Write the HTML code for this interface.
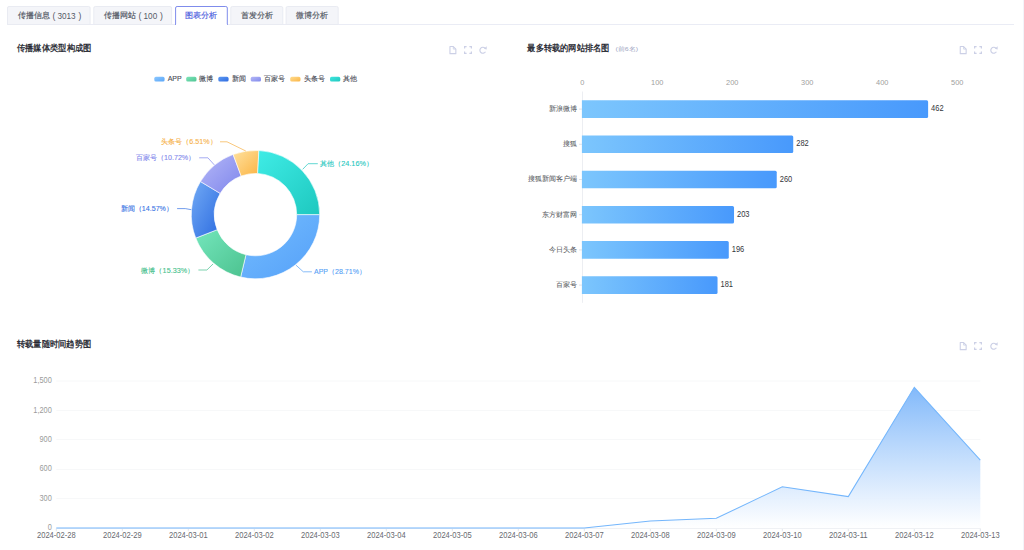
<!DOCTYPE html>
<html><head><meta charset="utf-8"><style>
html,body{margin:0;padding:0;background:#fff;width:1024px;height:550px;overflow:hidden}
svg{display:block;font-family:"Liberation Sans", sans-serif}
</style></head><body>
<svg width="1024" height="550" viewBox="0 0 1024 550">
<defs><linearGradient id="pg0" x1="0" y1="0" x2="1" y2="1"><stop offset="0" stop-color="#74bdff"/><stop offset="1" stop-color="#55a0f8"/></linearGradient><linearGradient id="pg1" x1="0" y1="0" x2="1" y2="1"><stop offset="0" stop-color="#74e6bc"/><stop offset="1" stop-color="#4cc28f"/></linearGradient><linearGradient id="pg2" x1="0" y1="0" x2="1" y2="1"><stop offset="0" stop-color="#72aaf5"/><stop offset="1" stop-color="#2d6ce0"/></linearGradient><linearGradient id="pg3" x1="0" y1="0" x2="1" y2="1"><stop offset="0" stop-color="#b5b8f7"/><stop offset="1" stop-color="#7f86ec"/></linearGradient><linearGradient id="pg4" x1="0" y1="0" x2="1" y2="1"><stop offset="0" stop-color="#ffe2a0"/><stop offset="1" stop-color="#fbb444"/></linearGradient><linearGradient id="pg5" x1="0" y1="0" x2="1" y2="1"><stop offset="0" stop-color="#3fece6"/><stop offset="1" stop-color="#1ec8bf"/></linearGradient><linearGradient id="lg0" x1="0" y1="0" x2="1" y2="1"><stop offset="0" stop-color="#8cc8ff"/><stop offset="1" stop-color="#5aa6f8"/></linearGradient><linearGradient id="lg1" x1="0" y1="0" x2="1" y2="1"><stop offset="0" stop-color="#7ee5b8"/><stop offset="1" stop-color="#4fc494"/></linearGradient><linearGradient id="lg2" x1="0" y1="0" x2="1" y2="1"><stop offset="0" stop-color="#5d9af2"/><stop offset="1" stop-color="#2f6be0"/></linearGradient><linearGradient id="lg3" x1="0" y1="0" x2="1" y2="1"><stop offset="0" stop-color="#b5b8f7"/><stop offset="1" stop-color="#8089ec"/></linearGradient><linearGradient id="lg4" x1="0" y1="0" x2="1" y2="1"><stop offset="0" stop-color="#ffdc8f"/><stop offset="1" stop-color="#fbb444"/></linearGradient><linearGradient id="lg5" x1="0" y1="0" x2="1" y2="1"><stop offset="0" stop-color="#40e6df"/><stop offset="1" stop-color="#1fc7be"/></linearGradient><linearGradient id="bg" x1="0" y1="0" x2="1" y2="0"><stop offset="0" stop-color="#7cc6fd"/><stop offset="1" stop-color="#4899fc"/></linearGradient><linearGradient id="ag" x1="0" y1="0" x2="0" y2="1"><stop offset="0" stop-color="#82b9fa"/><stop offset="1" stop-color="#ffffff" stop-opacity="0.9"/></linearGradient></defs>
<rect x="1023" y="0" width="1" height="550" fill="#f3f4f9"/>
<line x1="7" y1="24.5" x2="1014" y2="24.5" stroke="#eaecf5" stroke-width="1"/>
<path d="M7.5,24.5 V8 Q7.5,6.5 9,6.5 H88.6 Q90.1,6.5 90.1,8 V24.5 Z" fill="#f4f5f9" stroke="#e9ebf2" stroke-width="1"/>
<path d="M93.8,24.5 V8 Q93.8,6.5 95.3,6.5 H170.1 Q171.6,6.5 171.6,8 V24.5 Z" fill="#f4f5f9" stroke="#e9ebf2" stroke-width="1"/>
<path d="M175.6,25 V8 Q175.6,6.5 177.1,6.5 H225.8 Q227.3,6.5 227.3,8 V25" fill="#fff" stroke="#7f8cec" stroke-width="1"/>
<rect x="176.1" y="24" width="50.70000000000002" height="2" fill="#fff"/>
<path d="M230.8,24.5 V8 Q230.8,6.5 232.3,6.5 H281.3 Q282.8,6.5 282.8,8 V24.5 Z" fill="#f4f5f9" stroke="#e9ebf2" stroke-width="1"/>
<path d="M286.1,24.5 V8 Q286.1,6.5 287.6,6.5 H336.7 Q338.2,6.5 338.2,8 V24.5 Z" fill="#f4f5f9" stroke="#e9ebf2" stroke-width="1"/>
<text x="185.40" y="15.20" font-size="8" fill="#4f62e0" text-anchor="start" font-weight="normal" dominant-baseline="central" stroke="#4f62e0" stroke-width="0.18" >图表分析</text>
<text x="241.00" y="15.20" font-size="8" fill="#555a66" text-anchor="start" font-weight="normal" dominant-baseline="central" stroke="#555a66" stroke-width="0.18" >首发分析</text>
<text x="296.40" y="15.20" font-size="8" fill="#555a66" text-anchor="start" font-weight="normal" dominant-baseline="central" stroke="#555a66" stroke-width="0.18" >微博分析</text>
<text x="17.80" y="15.20" font-size="8" fill="#555a66" text-anchor="start" font-weight="normal" dominant-baseline="central" stroke="#555a66" stroke-width="0.18" >传播信息</text>
<text x="52.40" y="15.60" font-size="8.6" fill="#555a66" text-anchor="start" font-weight="normal" dominant-baseline="central" >(</text>
<text x="57.40" y="15.20" font-size="9.4" fill="#555a66" text-anchor="start" font-weight="normal" dominant-baseline="central" textLength="18.20" lengthAdjust="spacingAndGlyphs" >3013</text>
<text x="78.40" y="15.60" font-size="8.6" fill="#555a66" text-anchor="start" font-weight="normal" dominant-baseline="central" >)</text>
<text x="103.90" y="15.20" font-size="8" fill="#555a66" text-anchor="start" font-weight="normal" dominant-baseline="central" stroke="#555a66" stroke-width="0.18" >传播网站</text>
<text x="138.60" y="15.60" font-size="8.6" fill="#555a66" text-anchor="start" font-weight="normal" dominant-baseline="central" >(</text>
<text x="143.60" y="15.20" font-size="9.4" fill="#555a66" text-anchor="start" font-weight="normal" dominant-baseline="central" textLength="13.60" lengthAdjust="spacingAndGlyphs" >100</text>
<text x="160.00" y="15.60" font-size="8.6" fill="#555a66" text-anchor="start" font-weight="normal" dominant-baseline="central" >)</text>
<text x="16.80" y="47.90" font-size="9" fill="#1b1d2b" text-anchor="start" font-weight="normal" dominant-baseline="central" textLength="74.60" lengthAdjust="spacingAndGlyphs" stroke="#1b1d2b" stroke-width="0.3" >传播媒体类型构成图</text>
<text x="527.30" y="47.90" font-size="9" fill="#1b1d2b" text-anchor="start" font-weight="normal" dominant-baseline="central" textLength="82.20" lengthAdjust="spacingAndGlyphs" stroke="#1b1d2b" stroke-width="0.3" >最多转载的网站排名图</text>
<text x="16.90" y="343.90" font-size="9" fill="#1b1d2b" text-anchor="start" font-weight="normal" dominant-baseline="central" textLength="74.30" lengthAdjust="spacingAndGlyphs" stroke="#1b1d2b" stroke-width="0.3" >转载量随时间趋势图</text>
<text x="615.50" y="48.60" font-size="6" fill="#9ea5c2" text-anchor="start" font-weight="normal" dominant-baseline="central" textLength="22.60" lengthAdjust="spacingAndGlyphs" >(前6名)</text>
<path d="M449.95,46.55 H453.29999999999995 L455.84999999999997,49.1 V53.65 H449.95 Z" fill="none" stroke="#ccd0e6" stroke-width="1.1" stroke-linejoin="round"/>
<path d="M453.29999999999995,46.6 V49.1 H455.79999999999995" fill="none" stroke="#ccd0e6" stroke-width="0.8"/>
<path d="M464.6,48.6 V46.6 H466.6 M469.4,46.6 H471.4 V48.6 M471.4,51.4 V53.4 H469.4 M466.6,53.4 H464.6 V51.4" fill="none" stroke="#ccd0e6" stroke-width="1.2"/>
<path d="M485.50,51.70 A3.0,3.0 0 1 1 485.02,48.08" fill="none" stroke="#ccd0e6" stroke-width="1.15"/>
<path d="M483.80,48.70 L486.70,46.30 L486.70,49.60 Z" fill="#ccd0e6"/>
<path d="M960.25,46.55 H963.6 L966.1500000000001,49.1 V53.65 H960.25 Z" fill="none" stroke="#ccd0e6" stroke-width="1.1" stroke-linejoin="round"/>
<path d="M963.6,46.6 V49.1 H966.1" fill="none" stroke="#ccd0e6" stroke-width="0.8"/>
<path d="M974.6,48.6 V46.6 H976.6 M979.4,46.6 H981.4 V48.6 M981.4,51.4 V53.4 H979.4 M976.6,53.4 H974.6 V51.4" fill="none" stroke="#ccd0e6" stroke-width="1.2"/>
<path d="M996.40,51.70 A3.0,3.0 0 1 1 995.92,48.08" fill="none" stroke="#ccd0e6" stroke-width="1.15"/>
<path d="M994.70,48.70 L997.60,46.30 L997.60,49.60 Z" fill="#ccd0e6"/>
<path d="M960.25,342.55 H963.6 L966.1500000000001,345.1 V349.65 H960.25 Z" fill="none" stroke="#ccd0e6" stroke-width="1.1" stroke-linejoin="round"/>
<path d="M963.6,342.6 V345.1 H966.1" fill="none" stroke="#ccd0e6" stroke-width="0.8"/>
<path d="M974.6,344.6 V342.6 H976.6 M979.4,342.6 H981.4 V344.6 M981.4,347.4 V349.4 H979.4 M976.6,349.4 H974.6 V347.4" fill="none" stroke="#ccd0e6" stroke-width="1.2"/>
<path d="M996.40,347.70 A3.0,3.0 0 1 1 995.92,344.08" fill="none" stroke="#ccd0e6" stroke-width="1.15"/>
<path d="M994.70,344.70 L997.60,342.30 L997.60,345.60 Z" fill="#ccd0e6"/>
<path d="M319.70,214.60 A64.2,64.2 0 0 1 240.67,277.06 L245.98,254.69 A41.2,41.2 0 0 0 296.70,214.60 Z" fill="url(#pg0)" stroke="#fff" stroke-width="0.6" stroke-linejoin="round"/>
<path d="M240.67,277.06 A64.2,64.2 0 0 1 195.75,238.08 L217.16,229.67 A41.2,41.2 0 0 0 245.98,254.69 Z" fill="url(#pg1)" stroke="#fff" stroke-width="0.6" stroke-linejoin="round"/>
<path d="M195.75,238.08 A64.2,64.2 0 0 1 200.47,181.54 L220.18,193.38 A41.2,41.2 0 0 0 217.16,229.67 Z" fill="url(#pg2)" stroke="#fff" stroke-width="0.6" stroke-linejoin="round"/>
<path d="M200.47,181.54 A64.2,64.2 0 0 1 233.11,154.43 L241.13,175.99 A41.2,41.2 0 0 0 220.18,193.38 Z" fill="url(#pg3)" stroke="#fff" stroke-width="0.6" stroke-linejoin="round"/>
<path d="M233.11,154.43 A64.2,64.2 0 0 1 258.89,150.49 L257.67,173.46 A41.2,41.2 0 0 0 241.13,175.99 Z" fill="url(#pg4)" stroke="#fff" stroke-width="0.6" stroke-linejoin="round"/>
<path d="M258.89,150.49 A64.2,64.2 0 0 1 319.70,214.60 L296.70,214.60 A41.2,41.2 0 0 0 257.67,173.46 Z" fill="url(#pg5)" stroke="#fff" stroke-width="0.6" stroke-linejoin="round"/>
<path d="M296,265.2 L303.3,271.8 L311.9,271.8" fill="none" stroke="#559ff6" stroke-width="0.7"/>
<text x="314.00" y="271.80" font-size="7" fill="#559ff6" text-anchor="start" font-weight="normal" dominant-baseline="central" stroke="#559ff6" stroke-width="0.1" >APP</text>
<text x="328.01" y="271.80" font-size="7" fill="#559ff6" text-anchor="start" font-weight="normal" dominant-baseline="central" textLength="37.93" lengthAdjust="spacingAndGlyphs" stroke="#559ff6" stroke-width="0.1" >（28.71%）</text>
<path d="M213,264 L206.9,270 L198.4,270" fill="none" stroke="#45bf8c" stroke-width="0.7"/>
<text x="141.40" y="270.00" font-size="7" fill="#45bf8c" text-anchor="start" font-weight="normal" dominant-baseline="central" stroke="#45bf8c" stroke-width="0.1" >微博</text>
<text x="155.40" y="270.00" font-size="7" fill="#45bf8c" text-anchor="start" font-weight="normal" dominant-baseline="central" textLength="38.94" lengthAdjust="spacingAndGlyphs" stroke="#45bf8c" stroke-width="0.1" >（15.33%）</text>
<path d="M191.3,209.7 L185.3,208.6 L177.1,208.6" fill="none" stroke="#3672e4" stroke-width="0.7"/>
<text x="120.80" y="208.60" font-size="7" fill="#3672e4" text-anchor="start" font-weight="normal" dominant-baseline="central" stroke="#3672e4" stroke-width="0.1" >新闻</text>
<text x="134.80" y="208.60" font-size="7" fill="#3672e4" text-anchor="start" font-weight="normal" dominant-baseline="central" textLength="38.14" lengthAdjust="spacingAndGlyphs" stroke="#3672e4" stroke-width="0.1" >（14.57%）</text>
<path d="M214.3,164.9 L207.9,157.8 L199.2,157.8" fill="none" stroke="#7f87ec" stroke-width="0.7"/>
<text x="135.90" y="157.80" font-size="7" fill="#7f87ec" text-anchor="start" font-weight="normal" dominant-baseline="central" stroke="#7f87ec" stroke-width="0.1" >百家号</text>
<text x="156.90" y="157.80" font-size="7" fill="#7f87ec" text-anchor="start" font-weight="normal" dominant-baseline="central" textLength="38.44" lengthAdjust="spacingAndGlyphs" stroke="#7f87ec" stroke-width="0.1" >（10.72%）</text>
<path d="M245.8,151 L227,141.8 L220,141.8" fill="none" stroke="#f6b045" stroke-width="0.7"/>
<text x="161.20" y="141.80" font-size="7" fill="#f6b045" text-anchor="start" font-weight="normal" dominant-baseline="central" stroke="#f6b045" stroke-width="0.1" >头条号</text>
<text x="182.20" y="141.80" font-size="7" fill="#f6b045" text-anchor="start" font-weight="normal" dominant-baseline="central" textLength="34.64" lengthAdjust="spacingAndGlyphs" stroke="#f6b045" stroke-width="0.1" >（6.51%）</text>
<path d="M302.7,169.3 L308.1,163.7 L317.8,163.7" fill="none" stroke="#1ec7be" stroke-width="0.7"/>
<text x="320.00" y="163.40" font-size="7" fill="#1ec7be" text-anchor="start" font-weight="normal" dominant-baseline="central" stroke="#1ec7be" stroke-width="0.1" >其他</text>
<text x="334.00" y="163.40" font-size="7" fill="#1ec7be" text-anchor="start" font-weight="normal" dominant-baseline="central" textLength="39.14" lengthAdjust="spacingAndGlyphs" stroke="#1ec7be" stroke-width="0.1" >（24.16%）</text>
<rect x="154.3" y="76.8" width="10.3" height="4.8" rx="1.6" fill="url(#lg0)"/>
<text x="167.70" y="78.70" font-size="7" fill="#4a4d57" text-anchor="start" font-weight="normal" dominant-baseline="central" stroke="#4a4d57" stroke-width="0.12" >APP</text>
<rect x="186.2" y="76.8" width="10.3" height="4.8" rx="1.6" fill="url(#lg1)"/>
<text x="199.20" y="78.70" font-size="7" fill="#4a4d57" text-anchor="start" font-weight="normal" dominant-baseline="central" stroke="#4a4d57" stroke-width="0.12" >微博</text>
<rect x="218.3" y="76.8" width="10.3" height="4.8" rx="1.6" fill="url(#lg2)"/>
<text x="231.70" y="78.70" font-size="7" fill="#4a4d57" text-anchor="start" font-weight="normal" dominant-baseline="central" stroke="#4a4d57" stroke-width="0.12" >新闻</text>
<rect x="250.7" y="76.8" width="10.3" height="4.8" rx="1.6" fill="url(#lg3)"/>
<text x="263.70" y="78.70" font-size="7" fill="#4a4d57" text-anchor="start" font-weight="normal" dominant-baseline="central" stroke="#4a4d57" stroke-width="0.12" >百家号</text>
<rect x="290.2" y="76.8" width="10.3" height="4.8" rx="1.6" fill="url(#lg4)"/>
<text x="303.70" y="78.70" font-size="7" fill="#4a4d57" text-anchor="start" font-weight="normal" dominant-baseline="central" stroke="#4a4d57" stroke-width="0.12" >头条号</text>
<rect x="330" y="76.8" width="10.3" height="4.8" rx="1.6" fill="url(#lg5)"/>
<text x="343.10" y="78.70" font-size="7" fill="#4a4d57" text-anchor="start" font-weight="normal" dominant-baseline="central" stroke="#4a4d57" stroke-width="0.12" >其他</text>
<line x1="582.5" y1="91.5" x2="582.5" y2="302.8" stroke="#eceef2" stroke-width="1"/>
<text x="582.20" y="82.10" font-size="7.4" fill="#a0a0a0" text-anchor="middle" font-weight="normal" dominant-baseline="central" >0</text>
<text x="657.20" y="82.10" font-size="7.4" fill="#a0a0a0" text-anchor="middle" font-weight="normal" dominant-baseline="central" >100</text>
<text x="732.20" y="82.10" font-size="7.4" fill="#a0a0a0" text-anchor="middle" font-weight="normal" dominant-baseline="central" >200</text>
<text x="807.20" y="82.10" font-size="7.4" fill="#a0a0a0" text-anchor="middle" font-weight="normal" dominant-baseline="central" >300</text>
<text x="882.20" y="82.10" font-size="7.4" fill="#a0a0a0" text-anchor="middle" font-weight="normal" dominant-baseline="central" >400</text>
<text x="957.20" y="82.10" font-size="7.4" fill="#a0a0a0" text-anchor="middle" font-weight="normal" dominant-baseline="central" >500</text>
<path d="M581.9,100.30 H926.62 Q928.12,100.30 928.12,101.80 V116.40 Q928.12,117.90 926.62,117.90 H581.9 Z" fill="url(#bg)"/>
<line x1="579" y1="109.10" x2="582" y2="109.10" stroke="#d8dbe2" stroke-width="0.8"/>
<text x="577.30" y="108.50" font-size="7" fill="#5a5d64" text-anchor="end" font-weight="normal" dominant-baseline="central" stroke="#5a5d64" stroke-width="0.06" >新浪微博</text>
<text x="931.12" y="108.10" font-size="8.8" fill="#33353b" text-anchor="start" font-weight="normal" dominant-baseline="central" textLength="12.50" lengthAdjust="spacingAndGlyphs" >462</text>
<path d="M581.9,135.50 H791.73 Q793.23,135.50 793.23,137.00 V151.60 Q793.23,153.10 791.73,153.10 H581.9 Z" fill="url(#bg)"/>
<line x1="579" y1="144.30" x2="582" y2="144.30" stroke="#d8dbe2" stroke-width="0.8"/>
<text x="577.30" y="143.70" font-size="7" fill="#5a5d64" text-anchor="end" font-weight="normal" dominant-baseline="central" stroke="#5a5d64" stroke-width="0.06" >搜狐</text>
<text x="796.23" y="143.30" font-size="8.8" fill="#33353b" text-anchor="start" font-weight="normal" dominant-baseline="central" textLength="12.50" lengthAdjust="spacingAndGlyphs" >282</text>
<path d="M581.9,170.70 H775.24 Q776.74,170.70 776.74,172.20 V186.80 Q776.74,188.30 775.24,188.30 H581.9 Z" fill="url(#bg)"/>
<line x1="579" y1="179.50" x2="582" y2="179.50" stroke="#d8dbe2" stroke-width="0.8"/>
<text x="577.30" y="178.90" font-size="7" fill="#5a5d64" text-anchor="end" font-weight="normal" dominant-baseline="central" stroke="#5a5d64" stroke-width="0.06" >搜狐新闻客户端</text>
<text x="779.74" y="178.50" font-size="8.8" fill="#33353b" text-anchor="start" font-weight="normal" dominant-baseline="central" textLength="12.50" lengthAdjust="spacingAndGlyphs" >260</text>
<path d="M581.9,205.90 H732.53 Q734.03,205.90 734.03,207.40 V222.00 Q734.03,223.50 732.53,223.50 H581.9 Z" fill="url(#bg)"/>
<line x1="579" y1="214.70" x2="582" y2="214.70" stroke="#d8dbe2" stroke-width="0.8"/>
<text x="577.30" y="214.10" font-size="7" fill="#5a5d64" text-anchor="end" font-weight="normal" dominant-baseline="central" stroke="#5a5d64" stroke-width="0.06" >东方财富网</text>
<text x="737.03" y="213.70" font-size="8.8" fill="#33353b" text-anchor="start" font-weight="normal" dominant-baseline="central" textLength="12.50" lengthAdjust="spacingAndGlyphs" >203</text>
<path d="M581.9,241.10 H727.28 Q728.78,241.10 728.78,242.60 V257.20 Q728.78,258.70 727.28,258.70 H581.9 Z" fill="url(#bg)"/>
<line x1="579" y1="249.90" x2="582" y2="249.90" stroke="#d8dbe2" stroke-width="0.8"/>
<text x="577.30" y="249.30" font-size="7" fill="#5a5d64" text-anchor="end" font-weight="normal" dominant-baseline="central" stroke="#5a5d64" stroke-width="0.06" >今日头条</text>
<text x="731.78" y="248.90" font-size="8.8" fill="#33353b" text-anchor="start" font-weight="normal" dominant-baseline="central" textLength="12.50" lengthAdjust="spacingAndGlyphs" >196</text>
<path d="M581.9,276.30 H716.04 Q717.54,276.30 717.54,277.80 V292.40 Q717.54,293.90 716.04,293.90 H581.9 Z" fill="url(#bg)"/>
<line x1="579" y1="285.10" x2="582" y2="285.10" stroke="#d8dbe2" stroke-width="0.8"/>
<text x="577.30" y="284.50" font-size="7" fill="#5a5d64" text-anchor="end" font-weight="normal" dominant-baseline="central" stroke="#5a5d64" stroke-width="0.06" >百家号</text>
<text x="720.54" y="284.10" font-size="8.8" fill="#33353b" text-anchor="start" font-weight="normal" dominant-baseline="central" textLength="12.50" lengthAdjust="spacingAndGlyphs" >181</text>
<line x1="56.3" y1="498.50" x2="980.3" y2="498.50" stroke="#f5f6f8" stroke-width="0.8"/>
<line x1="56.3" y1="469.50" x2="980.3" y2="469.50" stroke="#f5f6f8" stroke-width="0.8"/>
<line x1="56.3" y1="439.50" x2="980.3" y2="439.50" stroke="#f5f6f8" stroke-width="0.8"/>
<line x1="56.3" y1="410.50" x2="980.3" y2="410.50" stroke="#f5f6f8" stroke-width="0.8"/>
<line x1="56.3" y1="381.00" x2="980.3" y2="381.00" stroke="#f5f6f8" stroke-width="0.8"/>
<text x="51.80" y="527.00" font-size="8.3" fill="#9b9b9b" text-anchor="end" font-weight="normal" dominant-baseline="central" textLength="4.11" lengthAdjust="spacingAndGlyphs" >0</text>
<text x="51.80" y="497.65" font-size="8.3" fill="#9b9b9b" text-anchor="end" font-weight="normal" dominant-baseline="central" textLength="12.32" lengthAdjust="spacingAndGlyphs" >300</text>
<text x="51.80" y="468.30" font-size="8.3" fill="#9b9b9b" text-anchor="end" font-weight="normal" dominant-baseline="central" textLength="12.32" lengthAdjust="spacingAndGlyphs" >600</text>
<text x="51.80" y="438.95" font-size="8.3" fill="#9b9b9b" text-anchor="end" font-weight="normal" dominant-baseline="central" textLength="12.32" lengthAdjust="spacingAndGlyphs" >900</text>
<text x="51.80" y="409.60" font-size="8.3" fill="#9b9b9b" text-anchor="end" font-weight="normal" dominant-baseline="central" textLength="18.49" lengthAdjust="spacingAndGlyphs" >1,200</text>
<text x="51.80" y="380.25" font-size="8.3" fill="#9b9b9b" text-anchor="end" font-weight="normal" dominant-baseline="central" textLength="18.49" lengthAdjust="spacingAndGlyphs" >1,500</text>
<line x1="56.3" y1="528.5" x2="980.3" y2="528.5" stroke="#e2e5ec" stroke-width="1"/>
<line x1="56.30" y1="528.5" x2="56.30" y2="531.3" stroke="#e2e5ec" stroke-width="1"/>
<text x="56.30" y="535.10" font-size="8.3" fill="#686a70" text-anchor="middle" font-weight="normal" dominant-baseline="central" textLength="38.60" lengthAdjust="spacingAndGlyphs" >2024-02-28</text>
<line x1="122.30" y1="528.5" x2="122.30" y2="531.3" stroke="#e2e5ec" stroke-width="1"/>
<text x="122.30" y="535.10" font-size="8.3" fill="#686a70" text-anchor="middle" font-weight="normal" dominant-baseline="central" textLength="38.60" lengthAdjust="spacingAndGlyphs" >2024-02-29</text>
<line x1="188.30" y1="528.5" x2="188.30" y2="531.3" stroke="#e2e5ec" stroke-width="1"/>
<text x="188.30" y="535.10" font-size="8.3" fill="#686a70" text-anchor="middle" font-weight="normal" dominant-baseline="central" textLength="38.60" lengthAdjust="spacingAndGlyphs" >2024-03-01</text>
<line x1="254.30" y1="528.5" x2="254.30" y2="531.3" stroke="#e2e5ec" stroke-width="1"/>
<text x="254.30" y="535.10" font-size="8.3" fill="#686a70" text-anchor="middle" font-weight="normal" dominant-baseline="central" textLength="38.60" lengthAdjust="spacingAndGlyphs" >2024-03-02</text>
<line x1="320.30" y1="528.5" x2="320.30" y2="531.3" stroke="#e2e5ec" stroke-width="1"/>
<text x="320.30" y="535.10" font-size="8.3" fill="#686a70" text-anchor="middle" font-weight="normal" dominant-baseline="central" textLength="38.60" lengthAdjust="spacingAndGlyphs" >2024-03-03</text>
<line x1="386.30" y1="528.5" x2="386.30" y2="531.3" stroke="#e2e5ec" stroke-width="1"/>
<text x="386.30" y="535.10" font-size="8.3" fill="#686a70" text-anchor="middle" font-weight="normal" dominant-baseline="central" textLength="38.60" lengthAdjust="spacingAndGlyphs" >2024-03-04</text>
<line x1="452.30" y1="528.5" x2="452.30" y2="531.3" stroke="#e2e5ec" stroke-width="1"/>
<text x="452.30" y="535.10" font-size="8.3" fill="#686a70" text-anchor="middle" font-weight="normal" dominant-baseline="central" textLength="38.60" lengthAdjust="spacingAndGlyphs" >2024-03-05</text>
<line x1="518.30" y1="528.5" x2="518.30" y2="531.3" stroke="#e2e5ec" stroke-width="1"/>
<text x="518.30" y="535.10" font-size="8.3" fill="#686a70" text-anchor="middle" font-weight="normal" dominant-baseline="central" textLength="38.60" lengthAdjust="spacingAndGlyphs" >2024-03-06</text>
<line x1="584.30" y1="528.5" x2="584.30" y2="531.3" stroke="#e2e5ec" stroke-width="1"/>
<text x="584.30" y="535.10" font-size="8.3" fill="#686a70" text-anchor="middle" font-weight="normal" dominant-baseline="central" textLength="38.60" lengthAdjust="spacingAndGlyphs" >2024-03-07</text>
<line x1="650.30" y1="528.5" x2="650.30" y2="531.3" stroke="#e2e5ec" stroke-width="1"/>
<text x="650.30" y="535.10" font-size="8.3" fill="#686a70" text-anchor="middle" font-weight="normal" dominant-baseline="central" textLength="38.60" lengthAdjust="spacingAndGlyphs" >2024-03-08</text>
<line x1="716.30" y1="528.5" x2="716.30" y2="531.3" stroke="#e2e5ec" stroke-width="1"/>
<text x="716.30" y="535.10" font-size="8.3" fill="#686a70" text-anchor="middle" font-weight="normal" dominant-baseline="central" textLength="38.60" lengthAdjust="spacingAndGlyphs" >2024-03-09</text>
<line x1="782.30" y1="528.5" x2="782.30" y2="531.3" stroke="#e2e5ec" stroke-width="1"/>
<text x="782.30" y="535.10" font-size="8.3" fill="#686a70" text-anchor="middle" font-weight="normal" dominant-baseline="central" textLength="38.60" lengthAdjust="spacingAndGlyphs" >2024-03-10</text>
<line x1="848.30" y1="528.5" x2="848.30" y2="531.3" stroke="#e2e5ec" stroke-width="1"/>
<text x="848.30" y="535.10" font-size="8.3" fill="#686a70" text-anchor="middle" font-weight="normal" dominant-baseline="central" textLength="38.60" lengthAdjust="spacingAndGlyphs" >2024-03-11</text>
<line x1="914.30" y1="528.5" x2="914.30" y2="531.3" stroke="#e2e5ec" stroke-width="1"/>
<text x="914.30" y="535.10" font-size="8.3" fill="#686a70" text-anchor="middle" font-weight="normal" dominant-baseline="central" textLength="38.60" lengthAdjust="spacingAndGlyphs" >2024-03-12</text>
<line x1="980.30" y1="528.5" x2="980.30" y2="531.3" stroke="#e2e5ec" stroke-width="1"/>
<text x="980.30" y="535.10" font-size="8.3" fill="#686a70" text-anchor="middle" font-weight="normal" dominant-baseline="central" textLength="38.60" lengthAdjust="spacingAndGlyphs" >2024-03-13</text>
<path d="M56.30,528.00 L122.30,528.00 L188.30,528.00 L254.30,528.00 L320.30,528.00 L386.30,528.00 L452.30,528.00 L518.30,528.00 L584.30,528.00 L650.30,520.90 L716.30,518.30 L782.30,486.80 L848.30,496.60 L914.30,387.30 L980.30,460.20 L980.3,528.5 L56.3,528.5 Z" fill="url(#ag)"/>
<path d="M56.30,528.00 L122.30,528.00 L188.30,528.00 L254.30,528.00 L320.30,528.00 L386.30,528.00 L452.30,528.00 L518.30,528.00 L584.30,528.00 L650.30,520.90 L716.30,518.30 L782.30,486.80 L848.30,496.60 L914.30,387.30 L980.30,460.20" fill="none" stroke="#74b6fc" stroke-width="1.05"/>
</svg></body></html>
